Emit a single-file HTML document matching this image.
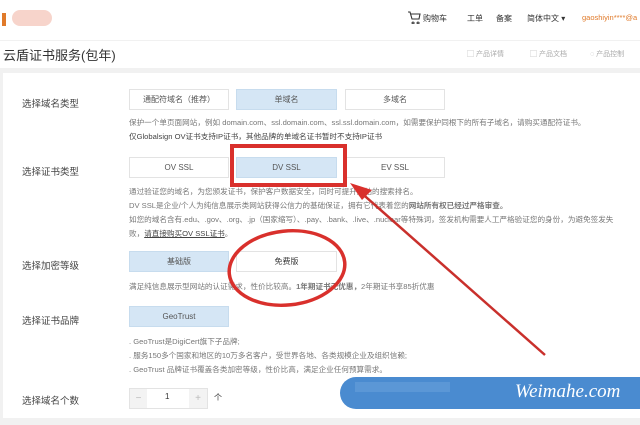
<!DOCTYPE html><html><head><meta charset="utf-8"><style>
*{margin:0;padding:0;box-sizing:border-box}
body{width:640px;height:425px;overflow:hidden;background:#f1f1f1;font-family:"Liberation Sans","Noto Sans CJK SC",sans-serif;position:relative;color:#333}
.a{position:absolute;white-space:nowrap}
.hd{left:0;top:0;width:640px;height:40px;background:#fff}
.tb{left:0;top:41px;width:640px;height:27px;background:#fff}
.pn{left:3px;top:73px;width:637px;height:345px;background:#fff}
.lb{font-size:9.5px;color:#444;left:22px}
.b{position:absolute;height:21px;border:1px solid #e3e3e3;background:#fff;font-size:8px;color:#555;text-align:center;line-height:19px}
.s{background:#d5e6f5;border-color:#c7dcee}
.d{font-size:7.6px;color:#777;left:129px}
</style></head><body>
<div class="a hd"></div>
<div class="a" style="left:2px;top:13px;width:4px;height:13px;background:#e07a2a"></div>
<div class="a" style="left:12px;top:10px;width:40px;height:16px;background:#f4c2b5;border-radius:8px;opacity:.7"></div>
<svg class="a" style="left:407px;top:11px" width="14" height="13" viewBox="0 0 14 13"><path d="M1 1h2l2 7h7l1-5H4M6 11a1 1 0 1 0 .1 0M11 11a1 1 0 1 0 .1 0" stroke="#333" fill="none" stroke-width="1.1"/></svg>
<div class="a" style="left:423px;top:13px;font-size:8px">购物车</div>
<div class="a" style="left:467px;top:13px;font-size:8px">工单</div>
<div class="a" style="left:496px;top:13px;font-size:8px">备案</div>
<div class="a" style="left:527px;top:13px;font-size:8px">简体中文 ▾</div>
<div class="a" style="left:582px;top:13px;font-size:7.5px;color:#e07a2a">gaoshiyin****@a</div>
<div class="a tb"></div>
<div class="a" style="left:3px;top:45px;font-size:13px;color:#333">云盾证书服务(包年)</div>
<div class="a" style="left:467px;top:49px;font-size:7px;color:#aaa">▢ 产品详情</div>
<div class="a" style="left:530px;top:49px;font-size:7px;color:#aaa">▢ 产品文档</div>
<div class="a" style="left:590px;top:49px;font-size:7px;color:#aaa">◌ 产品控制</div>
<div class="a pn"></div>

<div class="a lb" style="top:96px">选择域名类型</div>
<div class="b" style="left:129px;top:89px;width:100px">通配符域名（推荐）</div>
<div class="b s" style="left:236px;top:89px;width:101px">单域名</div>
<div class="b" style="left:345px;top:89px;width:100px">多域名</div>
<div class="a d" style="top:117px">保护一个单页面网站，例如 domain.com、ssl.domain.com、ssl.ssl.domain.com，如需要保护同根下的所有子域名，请购买通配符证书。</div>
<div class="a d" style="top:131px;color:#444">仅Globalsign OV证书支持IP证书，其他品牌的单域名证书暂时不支持IP证书</div>

<div class="a lb" style="top:164px">选择证书类型</div>
<div class="b" style="left:129px;top:157px;width:100px">OV SSL</div>
<div class="b s" style="left:236px;top:157px;width:101px">DV SSL</div>
<div class="b" style="left:345px;top:157px;width:100px">EV SSL</div>
<div class="a d" style="top:186px">通过验证您的域名，为您颁发证书，保护客户数据安全，同时可提升网站的搜索排名。</div>
<div class="a d" style="top:200px">DV SSL是企业/个人为纯信息展示类网站获得公信力的基础保证，拥有它代表着您的<b>网站所有权已经过严格审查。</b></div>
<div class="a d" style="top:214px">如您的域名含有.edu、.gov、.org、.jp（国家缩写）、.pay、.bank、.live、.nuclear等特殊词，签发机构需要人工严格验证您的身份，为避免签发失</div>
<div class="a d" style="top:228px">败，<u style="color:#444">请直接购买OV SSL证书</u>。</div>

<div class="a lb" style="top:258px">选择加密等级</div>
<div class="b s" style="left:129px;top:251px;width:100px">基础版</div>
<div class="b" style="left:236px;top:251px;width:101px;color:#333">免费版</div>
<div class="a d" style="top:281px">满足纯信息展示型网站的认证需求，性价比较高。<b>1年期证书无优惠，</b>2年期证书享85折优惠</div>

<div class="a lb" style="top:313px">选择证书品牌</div>
<div class="b s" style="left:129px;top:306px;width:100px">GeoTrust</div>
<div class="a d" style="top:336px">. GeoTrust是DigiCert旗下子品牌;</div>
<div class="a d" style="top:350px">. 服务150多个国家和地区的10万多名客户，受世界各地、各类规模企业及组织信赖;</div>
<div class="a d" style="top:364px">. GeoTrust 品牌证书覆盖各类加密等级，性价比高，满足企业任何预算需求。</div>

<div class="a lb" style="top:393px">选择域名个数</div>
<div class="b" style="left:129px;top:388px;width:79px"></div>
<div class="a" style="left:130px;top:389px;width:17px;height:19px;background:#f3f3f3;color:#bbb;font-size:10px;text-align:center;line-height:19px">−</div>
<div class="a" style="left:189px;top:389px;width:18px;height:19px;background:#f3f3f3;color:#bbb;font-size:10px;text-align:center;line-height:19px">+</div>
<div class="a" style="left:165px;top:392px;font-size:8px">1</div>
<div class="a" style="left:214px;top:392px;font-size:8px">个</div>

<div class="a" style="left:340px;top:377px;width:300px;height:32px;background:#4a8bd0;border-radius:16px 0 0 16px"></div>
<div class="a" style="left:355px;top:382px;width:95px;height:10px;background:#5b97d6"></div>
<div class="a" style="left:515px;top:381px;font-family:'Liberation Serif',serif;font-style:italic;font-size:19px;color:#fff">Weimahe.com</div>

<svg class="a" style="left:0;top:0" width="640" height="425">
<rect x="232" y="146" width="113" height="39" fill="none" stroke="#d9302c" stroke-width="4"/>
<ellipse cx="287" cy="268" rx="58" ry="37" fill="none" stroke="#d9302c" stroke-width="3.5" transform="rotate(-6 287 268)"/>
<line x1="545" y1="355" x2="358" y2="190" stroke="#c9302c" stroke-width="2.5"/>
<path d="M350 183 L372 190 L362 200 Z" fill="#d9302c"/>
</svg>
</body></html>
